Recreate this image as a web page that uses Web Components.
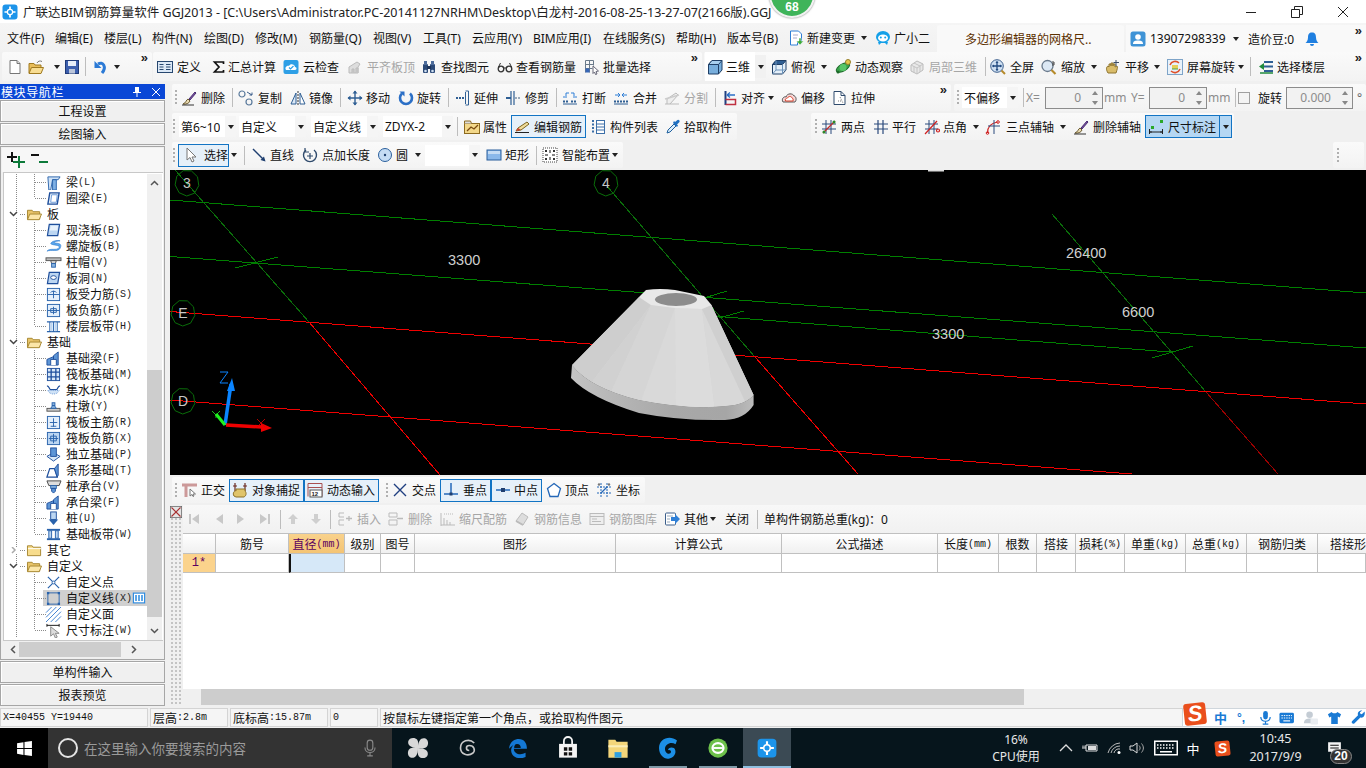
<!DOCTYPE html>
<html lang="zh">
<head>
<meta charset="utf-8">
<title>GGJ2013</title>
<style>
  html, body { margin: 0; padding: 0; background: #f0f0f0; }
  body { font: 12px "Noto Sans", "Noto Sans CJK SC", sans-serif; color: #111; width: 1366px; height: 768px; overflow: hidden; }
</style>
</head>
<body>
<app-shell></app-shell>

<script>
const ICONS = {
  logo: '<rect x=".5" y=".5" width="15" height="15" rx="3" fill="#1c94ea"/><path d="M8 2.5v11M2.5 8h11" stroke="#fff" stroke-width="1.7"/><circle cx="8" cy="8" r="2.6" fill="#1c94ea" stroke="#fff" stroke-width="1.2"/>',
  new: '<path d="M3 1.500h7l3 3v10H3z" fill="#fff" stroke="#777"/><path d="M10 1.500v3h3" fill="#ddd" stroke="#777"/>',
  open: '<path d="M1 4.500h5l1 1.500h6v8H1z" fill="#e8bd5a" stroke="#a07a20"/><path d="M1 14.500l2.500-6h12l-2.500 6z" fill="#f8dd92" stroke="#a07a20"/><path d="M9 4c1-2 3-2.500 5-1.500" fill="none" stroke="#777"/>',
  save: '<rect x="1.500" y="1.500" width="13" height="13" fill="#3c5fae" stroke="#1f3a78"/><rect x="4" y="2" width="8" height="5" fill="#e6edf8"/><rect x="5" y="10" width="6" height="4.500" fill="#bcc6da"/>',
  undo: '<path d="M5 5c5-3 9 3 4 9" fill="none" stroke="#2b7ad6" stroke-width="3"/><path d="M1.500 2v7h7z" fill="#2b7ad6"/>',
  define: '<rect x=".5" y="2.500" width="15" height="11" fill="#dbe8f6" stroke="#27476f"/><path d="M2.500 5.500h4M2.500 8h4M2.500 10.500h4M9 5.500h4.500M9 8h4.500M9 10.500h4.500" stroke="#27476f"/>',
  sigma: '<path d="M3.500 3h9v2M12.500 3h-9l4.500 5-4.500 5h9v-2" fill="none" stroke="#111" stroke-width="1.700"/>',
  cloud: '<rect x=".5" y="1" width="15" height="14" rx="2" fill="#2e9fe6"/><path d="M3 11c-2-3 2-5 3-4 1-3 6-2 6 1 2 0 2 3 0 3z" fill="#fff"/><path d="M6 8.500l1.500 1.500 3-3" fill="none" stroke="#2e9fe6" stroke-width="1.200"/>',
  level: '<path d="M2 14V8l8-5 3 2-2 3v6z" fill="#ddd" stroke="#bbb"/><path d="M5 14v-4h2v4M9 14V9h2v5" fill="#ccc" stroke="#bbb"/>',
  find: '<rect x="2" y="5" width="5" height="9" rx="1" fill="#2c4a78"/><rect x="9" y="5" width="5" height="9" rx="1" fill="#2c4a78"/><rect x="3" y="2" width="3" height="4" fill="#4e6d9c"/><rect x="10" y="2" width="3" height="4" fill="#4e6d9c"/><rect x="6" y="7" width="4" height="3" fill="#1d3358"/><circle cx="4.500" cy="12" r="1.300" fill="#cfe0f2"/><circle cx="11.500" cy="12" r="1.300" fill="#cfe0f2"/>',
  glasses: '<circle cx="4" cy="10" r="2.800" fill="none" stroke="#333" stroke-width="1.300"/><circle cx="12" cy="10" r="2.800" fill="none" stroke="#333" stroke-width="1.300"/><path d="M6.500 9h3M1.500 8l2-4M14.500 8l-2-4" stroke="#333"/>',
  batch: '<path d="M1.500 1.500h8M1.500 5.500h8M1.500 9.500h7M1.500 1.500v12M5.500 1.500v12M9.500 1.500v5" stroke="#6a7a8a" fill="none"/><rect x="1.500" y="9.500" width="4" height="4" fill="#3767b8"/><path d="M9 7l5.500 5-2.500.5 1 2.500-1.500.5-1-2.500-1.500 1.500z" fill="#fff" stroke="#667"/>',
  cube: '<path d="M1.500 5.500L5 1.500h10v9.500l-3.500 4H1.500z" fill="#78aedc" stroke="#1f3f66"/><path d="M1.500 5.500L5 1.500h10l-3.500 4z" fill="#a8cfee"/><path d="M1.500 5.500L5 1.500h10l-3.500 4h-10zM11.500 5.500V15" fill="none" stroke="#1f3f66"/>',
  topview: '<path d="M1.500 5.500L5 1.500h10v9.500l-3.500 4H1.500z" fill="#e4eff9" stroke="#1f3f66"/><path d="M1.500 5.500L5 1.500h10l-3.500 4z" fill="#2f5f94" stroke="#1f3f66"/><path d="M11.500 5.500V15M1.500 15L5 11h10M5 1.500V11" fill="none" stroke="#6c93ba"/>',
  orbit: '<ellipse cx="8" cy="8.500" rx="7.500" ry="3.500" transform="rotate(-30 8 8.500)" fill="#3aa44a" stroke="#1d6a2a"/><circle cx="8" cy="8.500" r="3.500" fill="#58c668"/><circle cx="13" cy="3" r="2.500" fill="#e3c74a" stroke="#98802a"/><circle cx="3" cy="13" r="1.500" fill="#1d6a2a"/>',
  local3d: '<path d="M2 6l6-4 6 3v6l-6 4-6-3z" fill="#e8e8e8" stroke="#bbb"/><path d="M2 6l6 3 6-4M8 9v6M5 4l6 3M5 7.500v6M11 7v6" fill="none" stroke="#c4c4c4"/>',
  fullscreen: '<circle cx="7" cy="7" r="6.300" fill="#cfe0f2" stroke="#3c5f8c"/><path d="M7 2.500v9M2.500 7h9" stroke="#234a80" stroke-width="1.300"/><path d="M7 2l-1.500 2h3zM7 12l-1.500-2h3zM2 7l2-1.500v3zM12 7l-2-1.500v3z" fill="#234a80"/><path d="M11.500 11.500L15 15" stroke="#b58a2a" stroke-width="2"/>',
  zoom: '<circle cx="6.500" cy="7" r="5.500" fill="#dce8f4" stroke="#6a7a8c" stroke-width="1.300"/><path d="M10.500 11l4 4" stroke="#b58a2a" stroke-width="2.200"/><path d="M12 2v5M13 3v3" stroke="#444"/>',
  pan: '<path d="M3 14c-2-3-2-6 0-7l1 1V5h2v2V4h2v3-2h2v3l2-1c1 1 0 4-1 7z" fill="#d9bc6a" stroke="#8e7430"/><path d="M11 1v6M8.500 3.500H14" stroke="#3b4c66"/>',
  rotscreen: '<rect x=".5" y=".5" width="15" height="15" fill="#e8f2fa" stroke="#7ea4c8"/><path d="M3 6a5.500 5.500 0 0 1 9-2M13 10a5.500 5.500 0 0 1-9 2" fill="none" stroke="#e0502a" stroke-width="1.600"/><rect x="5" y="6" width="6" height="4" fill="#e7cf58"/><path d="M5 10h6" stroke="#4aa04a"/>',
  floor: '<path d="M6 3h9M6 7.500h9M6 12h9" stroke="#2f5f94" stroke-width="2"/><path d="M1 7.500L6 4v7z" fill="#1f8a3c"/><path d="M2 14h13" stroke="#1f8a3c" stroke-width="1.500"/>',
  brush: '<path d="M2 14c3 .5 6-.5 7-3L7 9c-2 1-2 4-5 5z" fill="#e8d9b0" stroke="#6a5a30"/><path d="M8 9l6-7 1 1-6 7z" fill="#7a4fa8" stroke="#4a2f70"/><path d="M1 15h12" stroke="#333"/>',
  copy: '<circle cx="4" cy="4" r="3" fill="none" stroke="#5a7a9c" stroke-width="1.200"/><circle cx="11" cy="12" r="3" fill="none" stroke="#5a7a9c" stroke-width="1.200"/><path d="M9 2l5 3M14 5V2.500M14 5h-2.500" fill="none" stroke="#3c5f8c"/>',
  mirror: '<path d="M8 1v14" stroke="#333" stroke-dasharray="2 1"/><path d="M6 3v11H1z" fill="#dbe8f6" stroke="#2f5f94"/><path d="M10 3v11h5z" fill="#fff" stroke="#2f5f94"/>',
  move: '<path d="M8 1v14M1 8h14" stroke="#2f5f94" stroke-width="1.400"/><path d="M8 .5L5.500 3.500h5zM8 15.500l-2.500-3h5zM.5 8l3-2.500v5zM15.500 8l-3-2.500v5z" fill="#2f5f94"/>',
  rotate: '<path d="M4 3.500a6 6 0 1 0 8 0" fill="none" stroke="#2b6fc6" stroke-width="2.600"/><path d="M1.500 1.500h5v5z" fill="#2b6fc6"/>',
  extend: '<path d="M1 8h8" stroke="#2f5f94" stroke-dasharray="2 1" stroke-width="2"/><path d="M10.500 2v12M13.500 1v14" stroke="#2f5f94"/><path d="M10.500 1h3M10.500 15h3" stroke="#2f5f94"/>',
  trim: '<path d="M6 1v14M9 1v14" stroke="#2f5f94" stroke-width="1.200"/><path d="M1 8h5" stroke="#2f5f94" stroke-width="2"/><path d="M10 8h5" stroke="#9ab" stroke-dasharray="2 1" stroke-width="2"/>',
  brk: '<path d="M1 11.500h6M9 11.500h6" stroke="#2f5f94" stroke-width="2" stroke-dasharray="2 1"/><path d="M1 14h14" stroke="#2f5f94"/><path d="M4 3v3M4 3h3M12 3v3M12 3H9M1 7h4M15 7h-4" stroke="#2f7fd6" fill="none"/>',
  merge: '<path d="M1 11.500h14" stroke="#2f5f94" stroke-width="2" stroke-dasharray="2 1"/><path d="M1 14h14" stroke="#2f5f94"/><path d="M2 5h4M14 5h-4M5 3l2 2-2 2M11 3L9 5l2 2" stroke="#2f7fd6" fill="none"/>',
  split: '<path d="M1 14h14M3 14V9l9-6 2 2-8 9" fill="#eee" stroke="#bbb"/><path d="M1 9l14-4" stroke="#ccc" stroke-width="1.500"/>',
  align: '<path d="M2.500 1v14" stroke="#1f3f80" stroke-width="2"/><path d="M2.500 14.500h10v-5h-10" fill="none" stroke="#c03040" stroke-width="1.500"/><path d="M4 5h8M4 5l3-2.500M4 5l3 2.500" fill="none" stroke="#2b6fc6" stroke-width="1.300"/>',
  offset: '<path d="M2 12c-2-3 1-6 3-5 1-4 7-4 8-1 2 0 3 4 1 6z" fill="#f7d8d8" stroke="#555"/><path d="M4.500 11c-1-2 1-3 2-3 1-2 4-2 4.500 0 1 0 1.500 2 1 3z" fill="#fff" stroke="#d8402a"/>',
  stretch: '<path d="M2 1.500h7l4 4v9H2z" fill="#fff" stroke="#2f4a6c"/><path d="M9 1.500v4h4" fill="none" stroke="#2f4a6c"/><path d="M8 7l3 6M6 11h3" stroke="#777" stroke-dasharray="1 1"/>',
  props: '<rect x=".5" y="4.500" width="15" height="10" fill="#f3d88a" stroke="#8c6a20"/><path d="M.5 4.500V2h6l1 2.500" fill="#ddd" stroke="#8c6a20"/><path d="M3 12l4-4 3 2 4-4" fill="none" stroke="#7a4a10" stroke-width="1.300"/>',
  editrebar: '<path d="M1 13.500h14" stroke="#222"/><path d="M2 12l2-3 9-6 2 2-8 6z" fill="#f0dc9a" stroke="#7a6420"/><path d="M2 12l2-3 3 2z" fill="#d04030"/>',
  list: '<path d="M2 2h2M2 5.500h2M2 9h2M2 12.500h2" stroke="#3c6fa8" stroke-width="2"/><rect x="6.500" y="1.500" width="8" height="13" fill="#fff" stroke="#3c6fa8"/><path d="M6.500 5h8M6.500 8h8M6.500 11h8" stroke="#3c6fa8"/>',
  pick: '<path d="M2 14l1-3 6-6 2 2-6 6z" fill="#d8ecfb" stroke="#1f5f9c"/><path d="M8 4l4 4 1-1.500-1-1 2.500-2.500a1.500 1.500 0 0 0-2-2L10 3 9 2z" fill="#1f6fc0"/>',
  twopt: '<path d="M5 1v14M10 1v14M1 5h14M1 10h14" stroke="#2b4a7c"/><path d="M2 14L14 2" stroke="#c02a2a" stroke-width="1.200"/><circle cx="3" cy="13" r="1.500" fill="#2a8a2a"/><circle cx="13" cy="3" r="1.500" fill="#2a8a2a"/>',
  parallel: '<path d="M5 1v14M10 1v14M1 5h14M1 10h14" stroke="#2b4a7c" stroke-width="1.200"/>',
  ptangle: '<path d="M5 1v14M10 1v14M1 5h13M1 10h13" stroke="#2b4a7c"/><path d="M1 15L13 2" stroke="#d02020" stroke-width="1.200"/><circle cx="14" cy="11.500" r="1.500" fill="none" stroke="#d02020" stroke-width="1.200"/>',
  threept: '<path d="M2.500 14c0-6 4-10 10-11" fill="none" stroke="#d02020" stroke-width="1.200"/><path d="M9 1v14M3 7h12" stroke="#2b4a7c"/><circle cx="2.500" cy="14" r="1.300" fill="none" stroke="#d02020"/><circle cx="13" cy="3" r="1.300" fill="none" stroke="#d02020"/>',
  dim: '<path d="M1.500 10v5M14.500 10v5M1.500 13h13" stroke="#222"/><path d="M1.500 13l2-1v2zM14.500 13l-2-1v2z" fill="#222"/><rect x="3" y="7" width="3" height="3" fill="#2aa82a"/><rect x="12" y="1" width="3" height="3" fill="#2aa82a"/>',
  cursor: '<path d="M4 1v12l3-2.500 2 4.500 2-1-2-4h4z" fill="#fff" stroke="#777"/>',
  line: '<path d="M2 2l11 11" stroke="#1f3f70" stroke-width="1.500"/><path d="M14.500 14.500l-5-1.500 3.500-3.500z" fill="#1f3f70"/>',
  ptlen: '<path d="M4 3a6.500 6.500 0 1 0 8 0" fill="none" stroke="#2f4a6c" stroke-width="1.400"/><path d="M3 1v4h4" fill="none" stroke="#2f4a6c" stroke-width="1.200"/><path d="M8 6v6M5 9h6" stroke="#2f4a6c" stroke-width="1.200"/>',
  circle: '<circle cx="8" cy="8" r="6.500" fill="#c5dcf4" stroke="#2a5f9c"/><circle cx="8" cy="8" r="1.200" fill="#1f3f70"/>',
  rect: '<rect x="1" y="3" width="14" height="10" fill="#8ab8ea" stroke="#2a5f9c"/><rect x="2" y="4" width="12" height="3" fill="#c5dcf4"/>',
  smart: '<rect x="1" y="1" width="14" height="14" fill="#fff" stroke="#444" stroke-dasharray="1 1"/><path d="M8 3v3M8 10v3M3 8h3M10 8h3" stroke="#111"/><path d="M3 3h2v2H3zM11 3h2v2h-2zM3 11h2v2H3zM11 11h2v2h-2z" fill="#333"/>',
  ortho: '<path d="M1 3h15" stroke="#c99" stroke-width="3"/><path d="M5 3v12" stroke="#c99" stroke-width="3"/><path d="M9 7v7l2-1.500 1 2 1-.5-1-2h2.500z" fill="#fff" stroke="#777"/>',
  osnap: '<path d="M3 1v8M13 1v8M1 4h4M11 4h4" stroke="#6a2a20" stroke-width="1.200"/><path d="M2 14c-2-3 1-6 2-5V7h9v2c2 2 1 5-1 6H4z" fill="#e0c46a" stroke="#8c7028"/>',
  dyn: '<path d="M1 1.500h14M1 5.500h14M1 1.500v13M15 1.500v13" fill="none" stroke="#a85050"/><rect x="3" y="8" width="12" height="7" fill="#fff" stroke="#555"/><text x="4.500" y="14" font-size="6" font-family="Liberation Sans" font-weight="bold" fill="#222">12</text>',
  inter: '<path d="M2 2l12 12M14 2L2 14" stroke="#1f3f80" stroke-width="1.400"/>',
  perp: '<path d="M1 12h14" stroke="#2568b8" stroke-width="1.500"/><path d="M8 1v11" stroke="#2568b8" stroke-width="1.500"/><rect x="6.500" y="10.500" width="3" height="3" fill="#1f3f70"/>',
  mid: '<path d="M1 8h14" stroke="#2568b8" stroke-width="1.500"/><rect x="6" y="6" width="4" height="4" fill="#1f3f70"/>',
  vertex: '<path d="M8 1.500l6.500 5-2.500 8H4l-2.500-8z" fill="#fff" stroke="#2568b8" stroke-width="1.300"/>',
  coord: '<path d="M1 5h14M1 11h14M5 1v14M11 1v14" stroke="#2568b8" stroke-dasharray="2 1"/><path d="M5 11l6-6" stroke="#2568b8" stroke-width="1.300"/><circle cx="3" cy="2.500" r="1.200" fill="#777"/><circle cx="13" cy="2.500" r="1.200" fill="#777"/>',
  first: '<rect x="3" y="3" width="2" height="10" fill="#c8c8c8"/><path d="M13 3v10L6 8z" fill="#c8c8c8"/>',
  prev: '<path d="M12 3v10L5 8z" fill="#c8c8c8"/>',
  next: '<path d="M4 3v10l7-5z" fill="#c8c8c8"/>',
  last: '<rect x="11" y="3" width="2" height="10" fill="#c8c8c8"/><path d="M3 3v10l7-5z" fill="#c8c8c8"/>',
  up: '<path d="M8 3l5 5h-3v5H6V8H3z" fill="#cfcfcf"/>',
  down: '<path d="M8 13l5-5h-3V3H6v5H3z" fill="#cfcfcf"/>',
  ins: '<path d="M2 2h5M2 2v4h5M2 9h5M2 9v5h5" fill="none" stroke="#bbb"/><path d="M9 7.500h6M12 5v5" stroke="#bbb" stroke-width="1.300"/>',
  del: '<path d="M1 2h8v4H1zM1 9h8v5H1z" fill="none" stroke="#bbb"/><path d="M9 7.500h6" stroke="#bbb" stroke-width="1.500"/>',
  scale: '<path d="M1 2v13M1 14h14M4 14V7M7 14V9M10 14v-3" stroke="#bbb"/><path d="M4 3h9" stroke="#bbb" stroke-dasharray="1 1"/>',
  info: '<path d="M2 10l6-8 6 4-5 8z" fill="#ddd" stroke="#bbb"/><path d="M2 10l7 4" stroke="#bbb" stroke-width="2"/>',
  lib: '<rect x="1" y="2.500" width="14" height="11" fill="#eee" stroke="#bbb"/><path d="M1 5.500h14M3 8h5M3 10.500h9" stroke="#bbb"/>',
  other: '<rect x="1.500" y="2" width="10" height="12" rx="1" fill="#fff" stroke="#3c5f8c"/><path d="M3 5h6M3 8h3M3 11h3" stroke="#9ab"/><path d="M7 6h4V3l5 5-5 5v-3H7z" fill="#2f7fd6"/>',
  closex: '<rect x=".5" y=".5" width="15" height="15" fill="#e4e4e4" stroke="#666"/><path d="M2 2l12 12M14 2L2 14" stroke="#a83030" stroke-width="1.500"/>',
  change: '<path d="M2.500 1h8l3 3v8h-4v3h-7z" fill="#fff" stroke="#2f7fd6"/><path d="M5 5h5M5 8h4" stroke="#aac"/><path d="M11 8v3H8.500l3.500 4 3.500-4H13V8z" fill="#3aa83a" stroke="#fff" stroke-width=".5"/>',
  robot: '<ellipse cx="8" cy="7" rx="7" ry="6" fill="#14a0e8"/><path d="M3 12l1 3 2-2h4l2 2 1-3z" fill="#14a0e8"/><ellipse cx="8" cy="8" rx="5" ry="3.500" fill="#fff"/><circle cx="5.800" cy="7.500" r="1" fill="#14a0e8"/><circle cx="10.200" cy="7.500" r="1" fill="#14a0e8"/>',
  user: '<rect x=".5" y=".5" width="15" height="15" rx="2.500" fill="#3f93d6"/><circle cx="8" cy="6" r="2.800" fill="#fff"/><path d="M3 13c0-3 2-3.500 5-3.500s5 .5 5 3.500z" fill="#fff"/>',
  bell: '<path d="M8 1.500c-3 0-4 2-4 5 0 3-1.500 4.500-2.500 5.500h13c-1-1-2.500-2.500-2.500-5.500 0-3-1-5-4-5z" fill="#1f7fe0"/><path d="M6 13a2 2 0 0 0 4 0z" fill="#1f7fe0"/>',
  beam: '<path d="M2 2h13l-2 3H7l-2 11H3z" fill="#cfe2f6" stroke="#2a63ac"/><path d="M7 5h4v11H7z" fill="#7fb0e4" stroke="#2a63ac"/>',
  ring: '<path d="M4 2h10l-2 12H2z" fill="#e9f2fb" stroke="#1f4f9c" stroke-width="1.500"/><path d="M6 4h6l-1 8H5z" fill="#fff" stroke="#6c9bd6"/>',
  slabcast: '<path d="M3.500 1.500h11l-2 12h-11z" fill="#bcd6f2" stroke="#1f4f9c" stroke-width="1.300"/><path d="M5 3h8l-1 5H4z" fill="#e8f2fc"/>',
  spiral: '<path d="M1 13c3-4 11 0 13-4 1-3-7-2-9-4 1-3 7-4 10-3-3 0-7 1-6 2 3 1 9 0 6 6-2 4-10 1-14 3z" fill="#5aa6ec" stroke="#2a78cc" stroke-width=".6"/>',
  colcap: '<rect x="0" y="3" width="16" height="3" fill="#bbb" stroke="#555"/><path d="M5 6h6l-1 3H6z" fill="#ddd" stroke="#555"/><rect x="6" y="9" width="4" height="4" fill="#8ab4de" stroke="#2a63ac"/>',
  hole: '<path d="M3.500 1.500h11l-2 12h-11z" fill="#bcd6f2" stroke="#1f4f9c" stroke-width="1.300"/><ellipse cx="8" cy="7" rx="3" ry="2" fill="#fff" stroke="#1f4f9c"/>',
  slabrebar: '<rect x="1.500" y="1.500" width="13" height="13" fill="#e4effb" stroke="#2a63ac"/><path d="M1.500 8h13" stroke="#2a63ac"/><path d="M8 4v8M5 6c0-2 6-2 6 0" fill="none" stroke="#2a63ac"/>',
  slabneg: '<rect x="1.500" y="1.500" width="13" height="13" fill="#e4effb" stroke="#2a63ac"/><path d="M1.500 8h13M8 4v8M5 6h6v4H5z" fill="none" stroke="#2a63ac"/>',
  strip: '<path d="M1 3h14M1 13.500h14" stroke="#2a63ac" stroke-width="1.400"/><path d="M4 3v10.500M8 3v10.500M12 3v10.500" stroke="#2a63ac"/><rect x="5" y="4" width="2" height="9" fill="#bcd6f2"/><rect x="9" y="4" width="2" height="9" fill="#bcd6f2"/>',
  fbeam: '<path d="M1 15V9l7-3V15zM8 15V5l5-4v14z" fill="#5d95d6" stroke="#1f4f9c"/><path d="M5 15V9h6v6" fill="#fff" stroke="#1f4f9c"/>',
  raft: '<rect x="1.500" y="1.500" width="13" height="13" fill="#d8e8f8" stroke="#1f4f9c"/><path d="M5.500 1.500v13M10.500 1.500v13M1.500 5.500h13M1.500 10.500h13" stroke="#1f4f9c" stroke-width="1.400"/>',
  pit: '<path d="M1 3c3 0 2 4 4 4h6c2 0 1-4 4-4" fill="none" stroke="#1f4f9c" stroke-width="1.300"/><path d="M2 8c2 5 10 5 12 0z" fill="#cfe2f6" stroke="#6c9bd6" stroke-dasharray="1 1"/>',
  pier: '<rect x="1" y="10" width="14" height="3" fill="#ccc" stroke="#555"/><path d="M5 10l2-3h2l2 3z" fill="#8ab4de" stroke="#2a63ac"/><rect x="6.500" y="4" width="3" height="3" fill="#8ab4de" stroke="#2a63ac"/>',
  raftmain: '<rect x="1.500" y="1.500" width="13" height="13" fill="#e4effb" stroke="#2a63ac"/><path d="M8 3.500v9M4 8h8M5 12h6" stroke="#2a63ac"/>',
  raftneg: '<rect x="1.500" y="1.500" width="13" height="13" fill="#bcd6f2" stroke="#2a63ac"/><path d="M8 3v10M3 8h10M5 5.500h6v5H5z" fill="none" stroke="#2a63ac"/>',
  isolated: '<path d="M1 10l7-4 7 4-7 5z" fill="#d8e8f8" stroke="#1f4f9c"/><rect x="5" y="1" width="6" height="9" fill="#5d95d6" stroke="#1f4f9c"/>',
  stripf: '<path d="M1 15l3-9h5l3 9z" fill="#fff" stroke="#1f4f9c" stroke-width="1.300"/><path d="M9 6l4-5v12l-1 2z" fill="#5d95d6" stroke="#1f4f9c"/>',
  pilecap: '<path d="M1 2h15l-2 5H3z" fill="#ddd" stroke="#444"/><rect x="5" y="7" width="6" height="3" fill="#8ab4de" stroke="#2a63ac"/><path d="M6 10h4v3l-2 2-2-2z" fill="#5d95d6" stroke="#1f4f9c"/>',
  pile: '<rect x="5" y="1" width="6" height="8" fill="#bcd6f2" stroke="#1f4f9c"/><path d="M3 9h10l-5 6z" fill="#2a63ac"/>',
  fstrip: '<rect x="1" y="2" width="14" height="2" fill="#2a63ac"/><rect x="1" y="12" width="14" height="2" fill="#2a63ac"/><rect x="3" y="4" width="3" height="8" fill="#bcd6f2" stroke="#2a63ac"/><rect x="10" y="4" width="3" height="8" fill="#bcd6f2" stroke="#2a63ac"/>',
  cpoint: '<path d="M2 2l12 12M14 2L2 14" stroke="#2a63ac" stroke-width="1.300"/><circle cx="8" cy="8" r="1.500" fill="#fff" stroke="#2a63ac"/>',
  cline: '<rect x="2" y="2" width="12" height="12" fill="none" stroke="#2a63ac"/><rect x="1" y="1" width="2.500" height="2.500" fill="#2a63ac"/><rect x="12.500" y="1" width="2.500" height="2.500" fill="#2a63ac"/><rect x="1" y="12.500" width="2.500" height="2.500" fill="#2a63ac"/><rect x="12.500" y="12.500" width="2.500" height="2.500" fill="#2a63ac"/>',
  cface: '<path d="M0 6L6 0M0 11L11 0M0 16L16 0M5 16L16 5M10 16l6-6" stroke="#3d7fd0"/>',
  cdim: '<path d="M1 1v3M14 1v3M1 2.500h13" stroke="#111"/><path d="M5 4v10l3-2.500 2 4.500 2-1-2-4h4z" fill="#ddd" stroke="#888"/>',
  colsel: '<rect x=".5" y="1.500" width="15" height="13" fill="#fff" stroke="#2a8ae0" stroke-width="1.500"/><path d="M4 4v8M8 4v8M12 4v8" stroke="#2a8ae0" stroke-width="2"/>',
  folderopen: '<path d="M.5 3.500h5l1 1.500h7v8H.5z" fill="#e8c46a" stroke="#a5852f"/><path d="M.5 13.500l2.500-6h12.500l-2.500 6z" fill="#fbe6a8" stroke="#a5852f"/>',
  folderclosed: '<path d="M.5 3h5l1 1.500h8v9H.5z" fill="#f7dc8c" stroke="#a5852f"/><path d="M1 6h14" stroke="#fff"/>',
  win: '<path d="M1 3l6-1v5.500H1zM8 1.800L15 1v6.500H8zM1 8.500h6V14l-6-1zM8 8.500h7V15l-7-1z" fill="#fff"/>',
  mic: '<rect x="5.500" y="1" width="5" height="9" rx="2.500" fill="none" stroke="#8a8a8a"/><path d="M3.500 7.500c0 6 9 6 9 0M8 12.500V15M5.500 15h5" fill="none" stroke="#8a8a8a"/>',
  pinwheel: '<path d="M8 8C3 8 1 6 1.500 3.500 2 1 6 .5 7.500 2.500 8.500 4 8 6 8 8zM8 8c0-5 2-7 4.500-6.500C15 2 15.500 6 13.500 7.500 12 8.500 10 8 8 8zM8 8c5 0 7 2 6.500 4.500-.5 2.500-4.500 3-6 1C7.500 12 8 10 8 8zM8 8c0 5-2 7-4.500 6.500C1 14 .5 10 2.500 8.500 4 7.500 6 8 8 8z" fill="#d8d8d8"/>',
  swirl: '<path d="M13 4C9 0 2 2 2 8c0 5 6 7 10 4 2-2 1-6-3-6C6 6 6 10 9 10" fill="none" stroke="#c8c8c8" stroke-width="1.300"/>',
  edge: '<path d="M1.500 8.500C2 3 6 1.500 8.500 1.500c4 0 6 3 6 7H5c0 4 5 5 8.500 3v3c-5 2-10 .5-10.500-4.500 0-3 2-5 4-5.500-2 2-2 3-1.500 3.500H10c0-2-1-3-2.500-3-2.500 0-4.500 1.500-6 3.500z" fill="#1478d4"/>',
  store: '<path d="M1.500 5h13v10h-13z" fill="#f4f4f4"/><path d="M5 5V3a3 3 0 0 1 6 0v2" fill="none" stroke="#f4f4f4" stroke-width="1.300"/><path d="M5 7.500h2.500V10H5zM8.500 7.500H11V10H8.500zM5 11h2.500v2.500H5zM8.500 11H11v2.500H8.500z" fill="#111"/>',
  explorer: '<path d="M1 2h5l1 1.500h8V15H1z" fill="#f4d67a"/><rect x="1" y="6" width="14" height="1.500" fill="#fbeeb8"/><path d="M5.500 15v-4h5v4z" fill="#2f9fe0"/>',
  gblue: '<path d="M14 3C9-1 2 2 2 8c0 5 4 8 7 7 4-1 5-5 3-7-2-1-4 0-4 1.500 1-.5 2 0 2 1 0 2-4 2-4-2 0-3 4-5 7-3z" fill="#1c8fe6"/>',
  greene: '<circle cx="8" cy="8" r="7" fill="#6cc04a"/><ellipse cx="8" cy="8" rx="4" ry="3.500" fill="none" stroke="#fff" stroke-width="1.600"/><path d="M4.500 8h7" stroke="#fff" stroke-width="1.400"/>',
  batt: '<path d="M4 5h11v6H4z" fill="none" stroke="#ddd"/><rect x="6" y="6" width="8" height="4" fill="#ddd"/><path d="M0 8h4M1 5.500v2M3 5.500v2" stroke="#ddd"/>',
  wifi: '<path d="M1 13a13 13 0 0 1 12-10M4 13a9 9 0 0 1 9-7M7 13a5 5 0 0 1 6-4" fill="none" stroke="#bbb"/><circle cx="12" cy="12.500" r="1.500" fill="#fff"/>',
  vol: '<path d="M1 6h3l4-3v10l-4-3H1z" fill="none" stroke="#ddd"/><path d="M10 5.500c1.500 1.500 1.500 3.500 0 5M12.500 3.500c2.500 3 2.500 6 0 9" fill="none" stroke="#aaa"/>',
  kbd: '<rect x=".5" y="3.500" width="15" height="9" fill="none" stroke="#fff"/><path d="M2 6h12M2 8h12" stroke="#fff" stroke-dasharray="1 1"/><path d="M4 10.500h8" stroke="#fff"/>',
  notif: '<path d="M2 2h12v9H7l-2 3v-3H2z" fill="#f4f4f4"/><path d="M4 5h8M4 7.500h8" stroke="#111"/>',
  imemic: '<rect x="5.500" y="1" width="5" height="9" rx="2.500" fill="#1a7ad4"/><path d="M3 7.500c0 6 10 6 10 0M8 12.500V15M5 15h6" fill="none" stroke="#1a7ad4" stroke-width="1.300"/>',
  imekbd: '<rect x=".5" y="2.500" width="15" height="11" rx="1.500" fill="#1a7ad4"/><path d="M2.500 5.500h11M2.500 8h11" stroke="#fff" stroke-dasharray="1.500 1"/><path d="M4.500 11h7" stroke="#fff" stroke-width="1.200"/>',
  imeuser: '<circle cx="7" cy="5" r="3.500" fill="#c4ccd4"/><path d="M1 14c0-4 3-5 6-5s6 1 6 5z" fill="#c4ccd4"/><rect x="8" y="9" width="8" height="6.500" rx="1" fill="#e8ecf0"/>',
  shirt: '<path d="M5 2L1 4.500l1.500 3.500 2-1V15h7V7l2 1 1.500-3.500L11 2c-.5 2-5.500 2-6 0z" fill="#1a7ad4"/>',
  wrench: '<path d="M14.500 1.500l-3 3-1.500-.5-.5-1.500 2.500-2c-3-.5-5.500 2-4.500 5L1 12c-1 1.500 1 3.500 2.500 2.500L10 8c3 1 5.500-2.500 4.500-6.500z" fill="#1a7ad4"/>'
};

const svgIcon = (name, size = 16) => `<svg width="${size}" height="${size}" viewBox="0 0 16 16" style="display:block;flex:none;overflow:visible">${ICONS[name] || ''}</svg>`;

// small boxes used all over the toolbars
class ToolGroup extends HTMLElement {
  constructor() {
    super();
    this.shadowDOM = this.attachShadow({ mode: 'open' });
  }

  connectedCallback() {
    const w = this.getAttribute('w');
    const ml = this.getAttribute('ml') || 0;
    const pl = this.getAttribute('pl') || 0;
    this.shadowDOM.innerHTML = `
      <style>
        :host {
          display: flex; align-items: center; flex: none; box-sizing: border-box;
          height: 100%; width: ${w ? w + 'px' : 'auto'};
          margin-left: ${ml}px; padding-left: ${pl}px;
          background: linear-gradient(#fafafa, #f3f3f3); border-radius: 2px;
        }
      </style>
      <slot></slot>`;
  }
}

class ToolBtn extends HTMLElement {
  constructor() {
    super();
    this.shadowDOM = this.attachShadow({ mode: 'open' });
  }

  connectedCallback() {
    const w = this.getAttribute('w');
    const gap = this.getAttribute('g') || 4;
    const pad = this.getAttribute('p') || 0;
    const on = this.hasAttribute('on');
    const fill = this.getAttribute('fill') || '#e6f0f9';
    const off = this.hasAttribute('off');
    this.shadowDOM.innerHTML = `
      <style>
        :host {
          display: flex; align-items: center; flex: none; box-sizing: border-box;
          width: ${w}px; height: ${on ? '23px' : '100%'}; padding-left: ${pad}px; gap: ${gap}px;
          white-space: nowrap; color: ${off ? '#a6a6a6' : '#111'};
          ${on ? `border: 1px solid #1274c4; background: ${fill};` : ''}
        }
      </style>
      ${svgIcon(this.getAttribute('i'))}<slot></slot>`;
  }
}

class ToolGap extends HTMLElement {
  constructor() {
    super();
    this.attachShadow({ mode: 'open' });
  }

  connectedCallback() {
    this.shadowRoot.innerHTML = `<style>:host { display: block; flex: none; width: ${this.getAttribute('w')}px; height: 1px; }</style>`;
  }
}

class ToolSep extends HTMLElement {
  constructor() {
    super();
    this.attachShadow({ mode: 'open' });
  }

  connectedCallback() {
    this.shadowRoot.innerHTML = `
      <style>
        :host { display: block; flex: none; width: ${this.getAttribute('w')}px; height: 19px; box-sizing: border-box; }
        div { width: 1px; height: 100%; background: #bdbdbd; }
      </style>
      <div></div>`;
  }
}

class ToolArrow extends HTMLElement {
  constructor() {
    super();
    this.attachShadow({ mode: 'open' });
  }

  connectedCallback() {
    const boxed = this.getAttribute('box');
    this.shadowRoot.innerHTML = `
      <style>
        :host {
          display: flex; align-items: center; justify-content: center; flex: none; box-sizing: border-box;
          width: ${this.getAttribute('w')}px; height: ${boxed ? '23px' : '100%'};
          ${boxed === 'line' ? 'border: 1px solid #1274c4; border-left: 0; background: #b5d7f3;' : ''}
          ${boxed === 'soft' ? 'background: #f1f1f1;' : ''}
        }
        i { width: 0; height: 0; border: 3.5px solid transparent; border-top: 4px solid #222; border-bottom: 0; }
      </style>
      <i></i>`;
  }
}

class ToolGrip extends HTMLElement {
  constructor() {
    super();
    this.attachShadow({ mode: 'open' });
  }

  connectedCallback() {
    this.shadowRoot.innerHTML = `
      <style>
        :host { display: block; flex: none; width: ${this.getAttribute('w') || 6}px; height: 15px; }
        div { width: 2px; height: 100%; background: repeating-linear-gradient(#b0b0b0 0 2px, transparent 2px 4px); }
      </style>
      <div></div>`;
  }
}

class ToolMore extends HTMLElement {
  constructor() {
    super();
    this.attachShadow({ mode: 'open' });
  }

  connectedCallback() {
    const r = this.getAttribute('r') || 4;
    this.shadowRoot.innerHTML = `
      <style>
        :host { display: block; flex: none; margin-left: auto; margin-right: ${r}px; align-self: flex-start; height: 14px; }
        span { display: block; font: bold 13px/12px "Liberation Sans", sans-serif; color: #222; }
      </style>
      <span>»</span>`;
  }
}

class ToolLabel extends HTMLElement {
  constructor() {
    super();
    this.attachShadow({ mode: 'open' });
  }

  connectedCallback() {
    const w = this.getAttribute('w');
    const pad = this.getAttribute('p') || 0;
    const color = this.getAttribute('c') || '#111';
    this.shadowRoot.innerHTML = `
      <style>:host { display: block; flex: none; box-sizing: border-box; width: ${w ? w + 'px' : 'auto'}; padding-left: ${pad}px; white-space: nowrap; color: ${color}; }</style>
      <slot></slot>`;
  }
}

class ToolCombo extends HTMLElement {
  constructor() {
    super();
    this.attachShadow({ mode: 'open' });
  }

  connectedCallback() {
    const w = +this.getAttribute('w');
    const txt = this.getAttribute('t') || w - 13;
    this.shadowRoot.innerHTML = `
      <style>
        :host { display: flex; align-items: center; flex: none; width: ${w}px; height: 21px; background: #fff; }
        .text { box-sizing: border-box; width: ${txt}px; padding-left: 2px; overflow: hidden; white-space: nowrap; }
        .box { margin-left: auto; width: 11px; height: 100%; background: #f5f5f5; display: flex; align-items: center; justify-content: center; }
        i { width: 0; height: 0; border: 3.5px solid transparent; border-top: 4px solid #222; border-bottom: 0; }
      </style>
      <div class="text"><slot></slot></div><div class="box"><i></i></div>`;
  }
}

class ToolSpin extends HTMLElement {
  constructor() {
    super();
    this.attachShadow({ mode: 'open' });
  }

  connectedCallback() {
    this.shadowRoot.innerHTML = `
      <style>
        :host {
          display: flex; align-items: center; flex: none; box-sizing: border-box;
          width: ${this.getAttribute('w')}px; height: 22px; border: 1px solid #8c8c8c; background: #f2f2f2;
          font-size: 12px; color: #8c8c8c;
        }
        .val { flex: 1; text-align: right; padding-right: 6px; }
        .btn { width: 15px; display: flex; flex-direction: column; align-items: center; gap: 6px; }
        .up { width: 0; height: 0; border: 3px solid transparent; border-bottom: 4px solid #888; border-top: 0; }
        .dn { width: 0; height: 0; border: 3px solid transparent; border-top: 4px solid #888; border-bottom: 0; }
      </style>
      <div class="val"><slot></slot></div>
      <div class="btn"><i class="up"></i><i class="dn"></i></div>`;
  }
}

class ToolRow extends HTMLElement {
  constructor() {
    super();
    this.attachShadow({ mode: 'open' });
  }

  connectedCallback() {
    this.shadowRoot.innerHTML = `
      <style>:host { display: flex; flex: none; height: ${this.getAttribute('h') || 27}px; }</style>
      <slot></slot>`;
  }
}

class TitleBar extends HTMLElement {
  constructor() {
    super();
    this.shadowDOM = this.attachShadow({ mode: 'open' });
  }

  connectedCallback() {
    this.shadowDOM.innerHTML = `
      <style>
        :host { display: flex; align-items: center; flex: none; position: relative; height: 23px; background: #fff; padding-left: 2px; box-sizing: border-box; }
        .name { margin-left: 5px; white-space: nowrap; font-size: 12.5px; color: #222; }
        .badge {
          position: absolute; left: 769px; top: -28px; width: 46px; height: 46px; box-sizing: border-box; border-radius: 50%;
          background: #3fb45a; border: 2px solid #f2f2f2; box-shadow: 0 0 2px #777;
          display: flex; align-items: flex-end; justify-content: center; padding-bottom: 2px;
          color: #fff; font: bold 12px "Liberation Sans", sans-serif;
        }
        .win { margin-left: auto; display: flex; }
        .win div { width: 46px; height: 23px; display: flex; align-items: center; justify-content: center; }
      </style>
      ${svgIcon('logo')}
      <div class="name">广联达BIM钢筋算量软件 GGJ2013 - [C:\\Users\\Administrator.PC-20141127NRHM\\Desktop\\白龙村-2016-08-25-13-27-07(2166版).GGJ</div>
      <div class="badge">68</div>
      <div class="win">
        <div><svg width="12" height="12"><path d="M1 6.500h10" stroke="#222"/></svg></div>
        <div><svg width="12" height="12"><path d="M.5 3.500h8v8h-8zM3.500 3.500v-3h8v8h-3" fill="none" stroke="#222"/></svg></div>
        <div><svg width="12" height="12"><path d="M1 1l10 10M11 1L1 11" stroke="#222"/></svg></div>
      </div>`;
  }
}

class CadView extends HTMLElement {
  constructor() {
    super();
    this.shadowDOM = this.attachShadow({ mode: 'open' });
  }

  connectedCallback() {
    const ring = (cx, cy, label) => {
      const pts = [];
      for (let k = 0; k < 9; k++) {
        const a = k * Math.PI * 2 / 9 + .2;
        pts.push(`${(cx + 12 * Math.cos(a)).toFixed(1)},${(cy + 13 * Math.sin(a)).toFixed(1)}`);
      }
      return `<polygon points="${pts.join(' ')}" fill="none" stroke="#0a6e0a"/>
        <text x="${cx}" y="${cy + 5}" text-anchor="middle" font-size="14" fill="#c8c8c8">${label}</text>`;
    };
    const line = (a, c) => `<path d="M${a}" stroke="${c}" fill="none"/>`;
    const G = '#007f00';
    const R = '#f00000';
    const T0 = '639,297'; const T1 = '651,305'; const T2 = '675,308'; const T3 = '702,309'; const T4 = '711.5,305';
    const B = ['565,372', '582,395', '605,405', '637,412', '676,416', '716,418', '750,412', '760,405'];
    const facet = (pts, c) => `<polygon points="${pts.join(' ')}" fill="${c}"/>`;
    const body = 'M639 297L572 365Q590 388 639 400Q690 410 725 406Q745 405 753.600 395L711.500 305Z';
    const band = 'M572 365L571 378Q590 398 639 413Q680 421 725 420Q745 419 753.600 405L753.600 395Q745 405 725 406Q690 410 639 400Q590 388 572 365Z';
    this.shadowDOM.innerHTML = `
      <style>
        :host { display: block; flex: none; height: 305px; background: #000; overflow: hidden; }
        svg { display: block; font-family: "Liberation Sans", sans-serif; }
      </style>
      <svg width="1196" height="305" viewBox="170 170 1196 305">
        <defs>
          <clipPath id="bodyClip"><path d="${body}"/></clipPath>
          <linearGradient id="bandFill" gradientUnits="userSpaceOnUse" x1="571" y1="0" x2="754" y2="0">
            <stop offset="0" stop-color="#c4c4c4"/><stop offset=".2" stop-color="#b8b8b8"/><stop offset=".55" stop-color="#a8a8a8"/><stop offset=".85" stop-color="#a6a6a6"/><stop offset="1" stop-color="#bcbcbc"/>
          </linearGradient>
        </defs>
        <g shape-rendering="crispEdges">
          ${line('170 200L1366 293', G)}
          ${line('170 256.500L1366 348', G)}
          ${line('712 316L1170 352', G)}
          ${line('175 170L309 322', '#0a6e0a')}
          ${line('309 322L440 475', R)}
          ${line('606 185L755 357', '#0a6e0a')}
          ${line('755 357L858 474', R)}
          ${line('1052 214L1206 392', '#0a6e0a')}
          ${line('1206 392L1278 474', '#9c0000')}
          ${line('170 311.500L1366 404', R)}
          ${line('170 400L1132 474', R)}
          ${line('235 268L278 257', G)}
          ${line('704 298L727 291', G)}
          ${line('719 318L744 311', G)}
          ${line('1152 358L1193 346', G)}
        </g>
        <rect x="928" y="170" width="16" height="1.500" fill="#ddd"/>
        ${ring(187, 183, '3')}${ring(606, 183, '4')}${ring(183, 313, 'E')}${ring(183, 401, 'D')}
        <g font-size="14.500" fill="#cfcfcf">
          <text x="448" y="265">3300</text>
          <text x="1066" y="258">26400</text>
          <text x="1122" y="317">6600</text>
          <text x="932" y="339">3300</text>
        </g>
        <path d="${band}" fill="url(#bandFill)"/>
        <path d="${body}" fill="#d6d6d6"/>
        <g clip-path="url(#bodyClip)">
          ${facet([T0, T1, B[1], B[0]], '#cecece')}
          ${facet([T1, B[2], B[1]], '#d1d1d1')}
          ${facet([T1, T2, B[3], B[2]], '#d5d5d5')}
          ${facet([T2, B[4], B[3]], '#d9d9d9')}
          ${facet([T2, T3, B[5], B[4]], '#dcdcdc')}
          ${facet([T3, B[6], B[5]], '#d8d8d8')}
          ${facet([T3, T4, B[7], B[6]], '#cfcfcf')}
        </g>
        <path d="M639 297L646 290Q660 288 675 290L704 296L711.500 305L702 309L675 308L651 305Z" fill="#e8e8e8"/>
        <ellipse cx="676" cy="299.500" rx="21" ry="6.500" fill="#8c8c8c"/>
        <path d="M225 425L231 384" stroke="#0a84ff" stroke-width="3.500"/>
        <path d="M232 378L235 391H227Z" fill="#0a84ff"/>
        <path d="M220 372h8l-8 11h8" fill="none" stroke="#0a84ff"/>
        <path d="M225 425L216 414" stroke="#20f020" stroke-width="3"/>
        <path d="M212 411l4 4 4-4M216 415v3" fill="none" stroke="#20f020" stroke-width=".8"/>
        <path d="M226 425L262 427" stroke="#f00000" stroke-width="3.500"/>
        <path d="M272 428L261 423V432Z" fill="#f00000"/>
        <path d="M257 419l8 8M265 419l-8 8" stroke="#e00000" stroke-width=".8"/>
      </svg>`;
  }
}

class TreeRow extends HTMLElement {
  constructor() {
    super();
    this.attachShadow({ mode: 'open' });
  }

  connectedCallback() {
    const folder = this.hasAttribute('folder');
    const shut = this.hasAttribute('shut');
    const key = this.getAttribute('k');
    const last = this.hasAttribute('last');
    const sel = this.hasAttribute('sel');
    const vdots = 'background: linear-gradient(#8a8a8a 50%, transparent 50%); background-size: 1px 2px;';
    this.shadowRoot.innerHTML = `
      <style>
        :host { display: block; flex: none; position: relative; height: 16px; white-space: nowrap; overflow: hidden; }
        .row { display: flex; align-items: center; height: 16px; padding-left: ${folder ? 23 : 42}px; }
        .v1 { position: absolute; left: 12px; top: 0; width: 1px; height: 16px; ${vdots} }
        .v2 { position: absolute; left: 30px; top: 0; width: 1px; height: ${last ? 8 : 16}px; ${vdots} }
        .h { position: absolute; left: ${folder ? 16 : 31}px; top: 8px; width: ${folder ? 6 : 11}px; height: 1px; background: linear-gradient(90deg, #8a8a8a 50%, transparent 50%); background-size: 2px 1px; }
        .chev { position: absolute; left: 5px; top: 5px; background: #fff; }
        .txt { margin-left: 5px; ${sel ? 'width: 67px;' : ''} display: flex; align-items: center; }
        .k { font: 10px "Liberation Mono", monospace; color: #222; }
        .sel { position: absolute; left: 39px; top: 0; right: 0; height: 16px; background: #d0d0d0; }
        svg, .txt { position: relative; }
        .end { position: absolute; left: 129px; top: 2px; }
      </style>
      ${sel ? '<div class="sel"></div>' : ''}
      <div class="v1"></div>
      ${folder ? '' : '<div class="v2"></div>'}
      <div class="h"></div>
      ${folder ? `<svg class="chev" width="10" height="7"><path d="${shut ? 'M3 0l3 3-3 3' : 'M1 1l3.500 3.500L8 1'}" fill="none" stroke="${shut ? '#aaa' : '#444'}" stroke-width="1.500"/></svg>` : ''}
      <div class="row">${svgIcon(this.getAttribute('i'), 15)}<div class="txt"><slot></slot>${key ? `<span class="k">(${key})</span>` : ''}</div></div>
      ${sel ? `<div class="end">${svgIcon('colsel', 12)}</div>` : ''}`;
  }
}

class NavPanel extends HTMLElement {
  constructor() {
    super();
    this.shadowDOM = this.attachShadow({ mode: 'open' });
  }

  connectedCallback() {
    this.shadowDOM.innerHTML = `
      <style>
        :host { display: flex; flex-direction: column; flex: none; width: 165px; height: 100%; box-sizing: border-box; padding: 3px 0 2px; }
        .head { display: flex; align-items: center; height: 15px; background: #0a47d6; color: #fff; letter-spacing: .6px; padding-left: 1px; }
        .head svg { display: block; }
        .pin { margin-left: auto; margin-right: 9px; }
        .cross { margin-right: 4px; }
        .btn {
          display: flex; align-items: center; justify-content: center; flex: none; box-sizing: border-box; height: 22px;
          background: #f0f0f0; border: 1px solid #a6a6a6; box-shadow: inset 1px 1px 0 #fff; margin-top: 1px;
        }
        .tree-box { flex: 1; min-height: 0; margin: 1px 0; box-sizing: border-box; border: 1px solid #a6a6a6; background: #f0f0f0; padding: 1px; display: flex; flex-direction: column; }
        .tools { flex: none; height: 24px; background: #f7f7f7; display: flex; align-items: center; padding-left: 3px; gap: 4px; }
        .tree-wrap { flex: 1; min-height: 0; display: flex; margin-left: 1px; border: 1px solid #c8c8c8; border-right: 0; background: #fff; padding-top: 1px; }
        .rows { width: 143px; overflow: hidden; display: flex; flex-direction: column; background: #fff; }
        .vbar { flex: none; width: 15px; background: #f0f0f0; display: flex; flex-direction: column; align-items: center; box-sizing: border-box; padding-top: 6px; }
        .thumb { width: 15px; height: 247px; background: #cdcdcd; margin-top: 184px; }
        .hbar { flex: none; height: 17px; background: #f0f0f0; display: flex; align-items: center; padding-left: 8px; }
        .hthumb { width: 102px; height: 15px; background: #cdcdcd; margin-left: 3px; }
      </style>
      <div class="head">模块导航栏
        <svg class="pin" width="10" height="11"><path d="M3 1h4v5h2v1H5.500v4h-1V7H1V6h2z" fill="#fff"/></svg>
        <svg class="cross" width="10" height="10"><path d="M1 1l8 8M9 1L1 9" stroke="#fff"/></svg>
      </div>
      <div class="btn">工程设置</div>
      <div class="btn">绘图输入</div>
      <div class="tree-box">
        <div class="tools">
          <svg width="22" height="20"><path d="M7 2v10M2 7h10" stroke="#111" stroke-width="2"/><path d="M14 6v12M8 12h12" stroke="#0d7a3a" stroke-width="2"/></svg>
          <svg width="18" height="20"><path d="M0 5h8" stroke="#111" stroke-width="2"/><path d="M8 12h9" stroke="#0d7a3a" stroke-width="2"/></svg>
        </div>
        <div class="tree-wrap">
          <div class="rows"><slot></slot></div>
          <div class="vbar">
            <svg width="9" height="6"><path d="M1 5l3.500-3.500L8 5" fill="none" stroke="#555" stroke-width="1.500"/></svg>
            <div class="thumb"></div>
            <svg style="margin-top:11px" width="9" height="6"><path d="M1 1l3.500 3.500L8 1" fill="none" stroke="#555" stroke-width="1.500"/></svg>
          </div>
        </div>
        <div class="hbar">
          <svg width="6" height="9"><path d="M5 1L1.500 4.500 5 8" fill="none" stroke="#555" stroke-width="1.500"/></svg>
          <div class="hthumb"></div>
          <svg style="margin-left:10px" width="6" height="9"><path d="M1 1l3.500 3.500L1 8" fill="none" stroke="#555" stroke-width="1.500"/></svg>
        </div>
      </div>
      <div class="btn" style="margin-top:0">单构件输入</div>
      <div class="btn">报表预览</div>`;
  }
}

class GridPanel extends HTMLElement {
  constructor() {
    super();
    this.shadowDOM = this.attachShadow({ mode: 'open' });
  }

  connectedCallback() {
    const cols = [
      ['', 33], ['筋号', 73], ['直径', 56, 'mm'], ['级别', 36], ['图号', 34], ['图形', 201], ['计算公式', 166], ['公式描述', 156],
      ['长度', 61, 'mm'], ['根数', 38], ['搭接', 39], ['损耗', 49, '%'], ['单重', 61, 'kg'], ['总重', 61, 'kg'], ['钢筋归类', 71], ['搭接形', 48]
    ];
    const head = cols.map(([t, , k], i) => `<div class="h ${i === 2 ? 'cur' : ''} ${i === 15 ? 'cut' : ''}">${t}${k ? `<span class="k">(${k})</span>` : ''}</div>`).join('');
    const row = cols.map((c, i) => `<div class="c ${i === 0 ? 'no' : ''} ${i === 2 ? 'cell' : ''}">${i === 0 ? '1*' : ''}</div>`).join('');
    this.shadowDOM.innerHTML = `
      <style>
        :host { display: flex; flex: 1; min-height: 0; }
        .strip { flex: none; width: 13px; background: #f0f0f0; background-image: radial-gradient(#c4c4c4 1px, transparent 1px); background-size: 4px 4px; padding-top: 1px; }
        .strip svg { display: block; background: #f0f0f0; }
        .body { flex: 1; min-width: 0; display: flex; flex-direction: column; }
        .bar { flex: none; height: 28px; display: flex; align-items: center; background: linear-gradient(#f8f8f8, #f1f1f1); padding-left: 3px; }
        .sheet { flex: 1; min-height: 0; background: #fff; overflow: hidden; border-top: 1px solid #c0c0c0; }
        .grid { display: grid; grid-template-columns: ${cols.map(c => c[1] + 'px').join(' ')}; grid-template-rows: 20px 19px; }
        .h, .c { box-sizing: border-box; border-right: 1px solid #c0c0c0; border-bottom: 1px solid #c0c0c0; display: flex; align-items: center; justify-content: center; white-space: nowrap; overflow: hidden; }
        .h { background: linear-gradient(#fff, #f0f0f0); }
        .cut { justify-content: flex-start; padding-left: 12px; border-right: 0; }
        .k { font: 10px "Liberation Mono", monospace; position: relative; top: 1px; }
        .cur { background: linear-gradient(#f9d28c, #f4c474); color: #5a0060; }
        .no { background: #fbd38c; color: #5a0060; font: 12px "Liberation Mono", monospace; }
        .cell { background: #d6e8f8; border-left: 2px solid #111; }
        .scroll { flex: none; height: 17px; display: flex; background: #f0f0f0; border-top: 1px solid #fff; box-sizing: border-box; }
        .thumb { width: 823px; margin-left: 18px; background: #cdcdcd; }
      </style>
      <div class="strip">${svgIcon('closex', 12)}</div>
      <div class="body">
        <div class="bar"><slot></slot></div>
        <div class="sheet"><div class="grid">${head}${row}</div></div>
        <div class="scroll"><div class="thumb"></div></div>
      </div>`;
  }
}

class StatusBar extends HTMLElement {
  constructor() {
    super();
    this.shadowDOM = this.attachShadow({ mode: 'open' });
  }

  connectedCallback() {
    this.shadowDOM.innerHTML = `
      <style>
        :host { display: flex; flex: none; position: relative; height: 20px; background: #f0f0f0; gap: 2px; }
        .c { box-sizing: border-box; border: 1px solid #d4d4d4; background: #f5f5f5; display: flex; align-items: center; padding-left: 2px; white-space: nowrap; height: 19px; }
        .k { font: 10px "Liberation Mono", monospace; }
        .ime {
          position: absolute; left: 1182px; top: 0; right: 0; height: 19px; background: #fff; border: 1px solid #cfd6dc; border-right: 0; box-sizing: border-box;
          display: flex; align-items: center; padding-left: 31px; color: #1a7ad4;
        }
        .ime b { font: bold 13px "Noto Sans CJK SC", sans-serif; }
        .ime span { font: bold 12px/12px "Liberation Sans", sans-serif; margin-left: 10px; width: 12px; }
        .ime svg { margin-left: 9px; }
        .logo {
          position: absolute; left: 1184px; top: -5px; width: 22px; height: 22px; border-radius: 3px; background: #ea4f1c; transform: rotate(-6deg);
          color: #fff; font: bold italic 22px/22px "Liberation Sans", sans-serif; text-align: center;
        }
      </style>
      <div class="c k" style="width:148px">X=40455 Y=19440</div>
      <div class="c" style="width:78px">层高<span class="k">:2.8m</span></div>
      <div class="c" style="width:98px">底标高<span class="k">:15.87m</span></div>
      <div class="c k" style="width:48px">0</div>
      <div class="c" style="flex:1">按鼠标左键指定第一个角点，或拾取构件图元</div>
      <div class="ime">
        <b>中</b><span>°,</span>
        ${svgIcon('imemic', 15)}${svgIcon('imekbd', 16).replace('<svg ', '<svg style="margin-left:6px;display:block" ')}
        ${svgIcon('imeuser', 15)}${svgIcon('shirt', 15)}${svgIcon('wrench', 15)}
      </div>
      <div class="logo">S</div>`;
  }
}

class TaskBar extends HTMLElement {
  constructor() {
    super();
    this.shadowDOM = this.attachShadow({ mode: 'open' });
  }

  connectedCallback() {
    const pins = [['pinwheel', 24], ['swirl', 20], ['edge', 22], ['store', 22], ['explorer', 22], ['gblue', 24, 'u'], ['greene', 22, 'u'], ['logo', 20, 'a']];
    const apps = pins.map(([n, s, m]) => `<div class="pin ${m === 'u' ? 'under' : ''} ${m === 'a' ? 'act' : ''}">${svgIcon(n, s)}</div>`).join('');
    this.shadowDOM.innerHTML = `
      <style>
        :host { display: flex; flex: none; align-items: stretch; height: 40px; background: #06151c; color: #e8e8e8; }
        .start { flex: none; width: 48px; background: #000; display: flex; align-items: center; justify-content: center; }
        .search { flex: none; width: 344px; background: #333; display: flex; align-items: center; box-sizing: border-box; padding-left: 10px; color: #9a9a9a; font-size: 13.500px; margin-right: 1px; }
        .ring { width: 20px; height: 20px; box-sizing: border-box; border: 2.500px solid #e4e4e4; border-radius: 50%; margin-right: 6px; }
        .search span { flex: 1; }
        .search svg { margin-right: 13px; }
        .pin { flex: none; width: 50px; display: flex; align-items: center; justify-content: center; box-sizing: border-box; position: relative; }
        .under::after { content: ''; position: absolute; left: 6px; right: 6px; bottom: 0; height: 2px; background: #7f9aa8; }
        .act { width: 48px; background: #3b4a54; }
        .act::after { content: ''; position: absolute; left: 0; right: 0; bottom: 0; height: 2px; background: #8fc0e0; }
        .cpu { flex: none; margin-left: auto; margin-right: 6px; width: 64px; text-align: center; font-size: 12px; line-height: 17px; padding-top: 3px; }
        .tray { flex: none; display: flex; align-items: center; justify-content: center; font-size: 13px; }
        .s { width: 15px; height: 15px; background: #ea4f1c; border-radius: 2px; color: #fff; font: bold italic 14px/15px "Liberation Sans", sans-serif; text-align: center; transform: rotate(-6deg); }
        .clock { flex: none; width: 67px; text-align: center; line-height: 18px; padding-top: 2px; font-size: 12.500px; }
        .note { flex: none; width: 50px; margin-right: 7px; position: relative; display: flex; align-items: center; justify-content: center; }
        .count { position: absolute; left: 21px; top: 21px; width: 20px; height: 13px; border-radius: 8px; background: #333; border: 1px solid #888; color: #fff; font: bold 12px/13px "Liberation Sans", sans-serif; text-align: center; }
      </style>
      <div class="start">${svgIcon('win', 17)}</div>
      <div class="search"><div class="ring"></div><span>在这里输入你要搜索的内容</span>${svgIcon('mic', 18)}</div>
      ${apps}
      <div class="cpu">16%<br>CPU使用</div>
      <div class="tray" style="width:24px"><svg width="14" height="8"><path d="M1 7l6-6 6 6" fill="none" stroke="#ddd" stroke-width="1.300"/></svg></div>
      <div class="tray" style="width:24px">${svgIcon('batt')}</div>
      <div class="tray" style="width:25px">${svgIcon('wifi')}</div>
      <div class="tray" style="width:20px">${svgIcon('vol')}</div>
      <div class="tray" style="width:37px">${svgIcon('kbd', 24)}</div>
      <div class="tray" style="width:18px;color:#fff">中</div>
      <div class="tray" style="width:40px"><div class="s">S</div></div>
      <div class="clock">10:45<br>2017/9/9</div>
      <div class="note">${svgIcon('notif', 17)}<div class="count">20</div></div>`;
  }
}

class AppShell extends HTMLElement {
  constructor() {
    super();
    this.shadowDOM = this.attachShadow({ mode: 'open' });
  }

  connectedCallback() {
    const m = (t, w) => `<tool-label w="${w}">${t}</tool-label>`;
    const row = (t, i, k, extra = '') => `<tree-row i="${i}" ${k ? `k="${k}"` : ''} ${extra}>${t}</tree-row>`;
    this.shadowDOM.innerHTML = `
      <style>
        :host { display: flex; flex-direction: column; width: 1366px; height: 768px; overflow: hidden; }
        .menu { display: flex; align-items: center; flex: none; height: 29px; padding-left: 7px; background: linear-gradient(#f5f5f5, #f1f1f1); box-sizing: border-box; position: relative; }
        .tab { flex: none; box-sizing: border-box; width: 187px; height: 27px; margin: 0 2px; background: #f9f9f9; color: #5c3000; padding: 5px 0 0 28px; border-radius: 3px 3px 0 0; align-self: flex-end; white-space: nowrap; }
        .me { display: flex; align-items: center; flex: 1; align-self: flex-end; height: 27px; background: #f9f9f9; padding-left: 4px; }
        .main { display: flex; flex: 1; min-height: 0; }
        .right { display: flex; flex-direction: column; flex: 1; min-width: 0; margin-left: 5px; padding: 3px 0 3px; gap: 2px; box-sizing: border-box; }
      </style>
      <title-bar></title-bar>
      <div class="menu">
        ${m('文件(F)', 48)}${m('编辑(E)', 49)}${m('楼层(L)', 48)}${m('构件(N)', 52)}${m('绘图(D)', 51)}${m('修改(M)', 54)}${m('钢筋量(Q)', 64)}${m('视图(V)', 50)}${m('工具(T)', 49)}${m('云应用(Y)', 61)}${m('BIM应用(I)', 70)}${m('在线服务(S)', 73)}${m('帮助(H)', 51)}${m('版本号(B)', 61)}
        <tool-btn i="change" w="71" g="3">新建变更</tool-btn><tool-arrow w="10"></tool-arrow><tool-gap w="6"></tool-gap>
        <tool-btn i="robot" w="60" g="3">广小二</tool-btn>
        <div class="tab">多边形编辑器的网格尺..</div>
        <div class="me">
          <tool-btn i="user" w="101">13907298339</tool-btn><tool-arrow w="10"></tool-arrow><tool-gap w="7"></tool-gap>
          <tool-label w="56">造价豆:0</tool-label><tool-btn i="bell" w="16" g="0"></tool-btn><tool-more></tool-more>
        </div>
      </div>

      <tool-row h="29">
        <tool-group w="150" ml="2" pl="5">
          <tool-btn i="new" w="21"></tool-btn><tool-btn i="open" w="22"></tool-btn><tool-arrow w="14"></tool-arrow><tool-btn i="save" w="21"></tool-btn>
          <tool-sep w="8"></tool-sep><tool-btn i="undo" w="17"></tool-btn><tool-arrow w="14"></tool-arrow><tool-more></tool-more>
        </tool-group>
        <tool-group w="549" ml="1" pl="4">
          <tool-btn i="define" w="54">定义</tool-btn><tool-btn i="sigma" w="72" g="1">汇总计算</tool-btn><tool-btn i="cloud" w="64">云检查</tool-btn>
          <tool-btn i="level" w="74" off>平齐板顶</tool-btn><tool-btn i="find" w="76">查找图元</tool-btn><tool-btn i="glasses" w="87" g="3">查看钢筋量</tool-btn>
          <tool-btn i="batch" w="70" g="3">批量选择</tool-btn><tool-more></tool-more>
        </tool-group>
        <tool-group ml="2" pl="1" style="flex:1">
          <tool-btn i="cube" w="50" p="2" g="3" style="background:#fff">三维</tool-btn><tool-arrow w="11" box="soft"></tool-arrow><tool-gap w="5"></tool-gap>
          <tool-btn i="topview" w="47">俯视</tool-btn><tool-arrow w="12"></tool-arrow><tool-gap w="5"></tool-gap>
          <tool-btn i="orbit" w="74">动态观察</tool-btn><tool-btn i="local3d" w="76" off>局部三维</tool-btn><tool-sep w="5"></tool-sep>
          <tool-btn i="fullscreen" w="51">全屏</tool-btn><tool-btn i="zoom" w="47">缩放</tool-btn><tool-arrow w="12"></tool-arrow><tool-gap w="5"></tool-gap>
          <tool-btn i="pan" w="46">平移</tool-btn><tool-arrow w="12"></tool-arrow><tool-gap w="4"></tool-gap>
          <tool-btn i="rotscreen" w="71">屏幕旋转</tool-btn><tool-arrow w="6"></tool-arrow><tool-gap w="6"></tool-gap><tool-sep w="8"></tool-sep>
          <tool-btn i="floor" w="70" g="3">选择楼层</tool-btn><tool-more></tool-more>
        </tool-group>
      </tool-row>

      <div class="main">
        <nav-panel>
          ${row('梁', 'beam', 'L')}${row('圈梁', 'ring', 'E', 'last')}
          <tree-row folder i="folderopen">板</tree-row>
          ${row('现浇板', 'slabcast', 'B')}${row('螺旋板', 'spiral', 'B')}${row('柱帽', 'colcap', 'V')}${row('板洞', 'hole', 'N')}${row('板受力筋', 'slabrebar', 'S')}${row('板负筋', 'slabneg', 'F')}${row('楼层板带', 'strip', 'H', 'last')}
          <tree-row folder i="folderopen">基础</tree-row>
          ${row('基础梁', 'fbeam', 'F')}${row('筏板基础', 'raft', 'M')}${row('集水坑', 'pit', 'K')}${row('柱墩', 'pier', 'Y')}${row('筏板主筋', 'raftmain', 'R')}${row('筏板负筋', 'raftneg', 'X')}${row('独立基础', 'isolated', 'P')}${row('条形基础', 'stripf', 'T')}${row('桩承台', 'pilecap', 'V')}${row('承台梁', 'fbeam', 'F')}${row('桩', 'pile', 'U')}${row('基础板带', 'fstrip', 'W', 'last')}
          <tree-row folder shut i="folderclosed">其它</tree-row>
          <tree-row folder i="folderopen">自定义</tree-row>
          ${row('自定义点', 'cpoint', '')}${row('自定义线', 'cline', 'X', 'sel')}${row('自定义面', 'cface', '')}${row('尺寸标注', 'cdim', 'W', 'last')}
        </nav-panel>

        <div class="right">
          <tool-row>
            <tool-group w="779" ml="2" pl="3">
              <tool-grip></tool-grip>
              <tool-btn i="brush" w="50">删除</tool-btn><tool-gap w="1"></tool-gap><tool-sep w="6"></tool-sep>
              <tool-btn i="copy" w="52" g="4">复制</tool-btn><tool-btn i="mirror" w="50" g="3">镜像</tool-btn><tool-sep w="7"></tool-sep>
              <tool-btn i="move" w="51" g="3">移动</tool-btn><tool-btn i="rotate" w="50" g="3">旋转</tool-btn><tool-sep w="7"></tool-sep>
              <tool-btn i="extend" w="50" g="3">延伸</tool-btn><tool-btn i="trim" w="51">修剪</tool-btn><tool-sep w="6"></tool-sep>
              <tool-btn i="brk" w="51">打断</tool-btn><tool-btn i="merge" w="51">合并</tool-btn><tool-btn i="split" w="51" off>分割</tool-btn><tool-sep w="8"></tool-sep>
              <tool-btn i="align" w="44" g="2">对齐</tool-btn><tool-arrow w="8"></tool-arrow><tool-gap w="6"></tool-gap>
              <tool-btn i="offset" w="51">偏移</tool-btn><tool-btn i="stretch" w="50" g="3">拉伸</tool-btn><tool-more></tool-more>
            </tool-group>
            <tool-group ml="3" pl="3" style="flex:1">
              <tool-grip w="5"></tool-grip>
              <tool-combo w="56" t="42">不偏移</tool-combo><tool-gap w="5"></tool-gap><tool-sep w="3"></tool-sep>
              <tool-label w="19" c="#8c8c8c">X=</tool-label><tool-spin w="58">0</tool-spin>
              <tool-label w="28" p="1" c="#8c8c8c">mm</tool-label><tool-label w="18" c="#8c8c8c">Y=</tool-label><tool-spin w="58">0</tool-spin>
              <tool-label w="28" p="1" c="#8c8c8c">mm</tool-label><tool-sep w="3"></tool-sep>
              <div style="flex:none;width:10px;height:10px;border:1px solid #a0a0a0;background:#f4f4f4"></div><tool-gap w="8"></tool-gap>
              <tool-label w="28">旋转</tool-label><tool-spin w="67">0.000</tool-spin><tool-label w="12" p="4" c="#666">°</tool-label>
            </tool-group>
          </tool-row>

          <tool-row>
            <tool-group w="565" ml="2" pl="1">
              <tool-grip></tool-grip>
              <tool-combo w="57" t="41">第6~10</tool-combo><tool-gap w="3"></tool-gap>
              <tool-combo w="67">自定义</tool-combo><tool-gap w="5"></tool-gap>
              <tool-combo w="67">自定义线</tool-combo><tool-gap w="5"></tool-gap>
              <tool-combo w="70">ZDYX-2</tool-combo><tool-gap w="4"></tool-gap><tool-sep w="7"></tool-sep>
              <tool-btn i="props" w="47" g="3">属性</tool-btn>
              <tool-btn i="editrebar" w="75" p="2" on>编辑钢筋</tool-btn><tool-gap w="4"></tool-gap>
              <tool-btn i="list" w="75">构件列表</tool-btn><tool-btn i="pick" w="70" g="3">拾取构件</tool-btn>
            </tool-group>
            <tool-group w="423" ml="74" pl="4">
              <tool-grip></tool-grip>
              <tool-btn i="twopt" w="52">两点</tool-btn><tool-btn i="parallel" w="51" g="3">平行</tool-btn><tool-btn i="ptangle" w="47" g="3">点角</tool-btn><tool-arrow w="10"></tool-arrow><tool-gap w="4"></tool-gap>
              <tool-btn i="threept" w="73" g="5">三点辅轴</tool-btn><tool-arrow w="10"></tool-arrow><tool-gap w="5"></tool-gap>
              <tool-btn i="brush" w="72">删除辅轴</tool-btn>
              <tool-btn i="dim" w="75" p="2" on fill="#b5d7f3">尺寸标注</tool-btn><tool-arrow w="12" box="line"></tool-arrow>
            </tool-group>
          </tool-row>

          <tool-row h="26">
            <tool-group w="451" ml="2" pl="1">
              <tool-grip w="5"></tool-grip>
              <tool-btn i="cursor" w="51" p="4" g="5" on>选择</tool-btn><tool-arrow w="10"></tool-arrow><tool-gap w="5"></tool-gap><tool-sep w="7"></tool-sep>
              <tool-btn i="line" w="51" g="3">直线</tool-btn><tool-btn i="ptlen" w="75">点加长度</tool-btn><tool-btn i="circle" w="33" g="3">圆</tool-btn><tool-arrow w="15"></tool-arrow>
              <tool-combo w="55"></tool-combo><tool-gap w="6"></tool-gap>
              <tool-btn i="rect" w="50" g="3">矩形</tool-btn><tool-sep w="6"></tool-sep>
              <tool-btn i="smart" w="68">智能布置</tool-btn><tool-arrow w="10"></tool-arrow>
            </tool-group>
            <tool-group w="31" ml="710" pl="4"><tool-grip></tool-grip></tool-group>
          </tool-row>

          <cad-view></cad-view>

          <tool-row h="26">
            <tool-group w="473" ml="2" pl="3">
              <tool-grip></tool-grip>
              <tool-btn i="ortho" w="48">正交</tool-btn>
              <tool-btn i="osnap" w="75" p="2" on>对象捕捉</tool-btn><tool-btn i="dyn" w="75" p="2" on>动态输入</tool-btn>
              <tool-gap w="7"></tool-gap><tool-grip></tool-grip>
              <tool-btn i="inter" w="48">交点</tool-btn>
              <tool-btn i="perp" w="51" p="2" on>垂点</tool-btn><tool-btn i="mid" w="51" p="3" g="3" on>中点</tool-btn>
              <tool-gap w="4"></tool-gap>
              <tool-btn i="vertex" w="50" g="3">顶点</tool-btn><tool-btn i="coord" w="46">坐标</tool-btn>
            </tool-group>
          </tool-row>

          <grid-panel>
            <tool-btn i="first" w="25"></tool-btn><tool-btn i="prev" w="22"></tool-btn><tool-btn i="next" w="24"></tool-btn><tool-btn i="last" w="20"></tool-btn>
            <tool-gap w="3"></tool-gap><tool-sep w="5"></tool-sep><tool-btn i="up" w="23"></tool-btn><tool-btn i="down" w="19"></tool-btn><tool-gap w="3"></tool-gap><tool-sep w="7"></tool-sep>
            <tool-btn i="ins" w="51" off>插入</tool-btn><tool-btn i="del" w="52" off>删除</tool-btn><tool-btn i="scale" w="74" g="3" off>缩尺配筋</tool-btn>
            <tool-btn i="info" w="75" off>钢筋信息</tool-btn><tool-btn i="lib" w="75" off>钢筋图库</tool-btn>
            <tool-btn i="other" w="45">其他</tool-btn><tool-arrow w="8"></tool-arrow><tool-gap w="8"></tool-gap>
            <tool-label w="32">关闭</tool-label><tool-sep w="7"></tool-sep>
            <tool-label>单构件钢筋总重(kg)：0</tool-label>
          </grid-panel>
        </div>
      </div>
      <status-bar></status-bar>
      <task-bar></task-bar>`;
  }
}

customElements.define('tool-group', ToolGroup);
customElements.define('tool-btn', ToolBtn);
customElements.define('tool-gap', ToolGap);
customElements.define('tool-sep', ToolSep);
customElements.define('tool-arrow', ToolArrow);
customElements.define('tool-grip', ToolGrip);
customElements.define('tool-more', ToolMore);
customElements.define('tool-label', ToolLabel);
customElements.define('tool-combo', ToolCombo);
customElements.define('tool-spin', ToolSpin);
customElements.define('tool-row', ToolRow);
customElements.define('title-bar', TitleBar);
customElements.define('cad-view', CadView);
customElements.define('tree-row', TreeRow);
customElements.define('nav-panel', NavPanel);
customElements.define('grid-panel', GridPanel);
customElements.define('status-bar', StatusBar);
customElements.define('task-bar', TaskBar);
customElements.define('app-shell', AppShell);
</script>
</body>
</html>
